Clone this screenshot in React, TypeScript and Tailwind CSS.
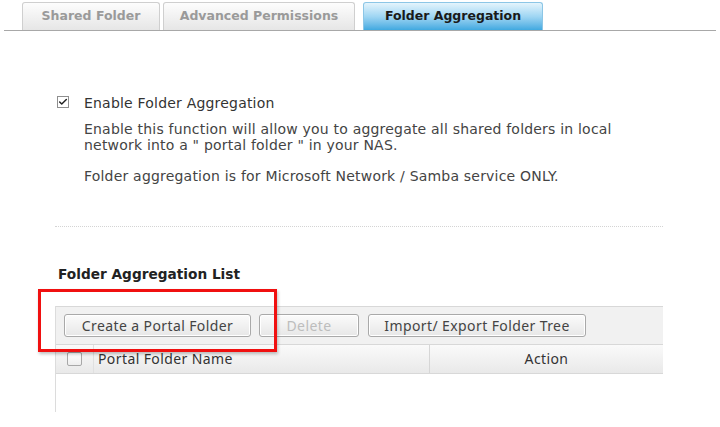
import { Check } from "lucide-react";

const tabs = [
  { label: "Shared Folder", w: "w-[138px]", active: false },
  { label: "Advanced Permissions", w: "w-[192px]", active: false },
  { label: "Folder Aggregation", w: "w-[180px]", active: true },
];

export default function App() {
  return (
    <div className="relative h-[427px] w-[720px] overflow-hidden bg-white font-['DejaVu_Sans',sans-serif] text-[#333]">
      {/* tab strip */}
      <div className="mx-[4px] flex h-[31px] items-end gap-[3px] border-b border-[#a8a8a8] pl-[18px]">
        {tabs.map((t, i) => (
          <div
            key={t.label}
            className={
              "flex h-[28px] items-center justify-center rounded-t-[3px] border border-b-0 text-[12.5px] font-bold " +
              t.w +
              (i === 2 ? " ml-[5px]" : "") +
              (t.active
                ? " border-[#8cc6e6] bg-gradient-to-b from-[#e4f4fc] via-[#9fd6f3] to-[#3fa9e0] text-[#1a1a1a]"
                : " border-[#cfcfcf] bg-gradient-to-b from-[#fdfdfd] to-[#e6e6e6] text-[#9a9a9a]")
            }
          >
            {t.label}
          </div>
        ))}
      </div>

      {/* enable option */}
      <div className="ml-[57px] mt-[64px] flex items-start gap-[15px]">
        <div className="mt-[1px] flex h-[12px] w-[12px] items-center justify-center border border-[#8f8f8f] bg-white">
          <Check size={10} strokeWidth={3.5} className="text-[#222]" />
        </div>
        <div className="text-[14px] leading-[16px] tracking-[0.2px]">
          <div className="text-[#333]">Enable Folder Aggregation</div>
          <div className="mt-[10px] text-[#444]">
            Enable this function will allow you to aggregate all shared folders in local
            <br />
            network into a " portal folder " in your NAS.
          </div>
          <div className="mt-[15px] text-[#444]">
            Folder aggregation is for Microsoft Network / Samba service ONLY.
          </div>
        </div>
      </div>

      <div className="ml-[55px] mt-[42px] w-[608px] border-t border-dotted border-[#d4d4d4]" />

      <div className="ml-[58px] mt-[37px] text-[13.7px] font-bold text-[#222]">
        Folder Aggregation List
      </div>

      {/* list */}
      <div className="ml-[55px] mt-[21px] w-[608px] border-l border-[#dcdcdc]">
        <div className="flex h-[38px] items-center gap-[8px] border-t border-[#d8d8d8] bg-[#f1f1f1] pl-[8px] font-['Noto_Sans',sans-serif] text-[14px] tracking-[0.4px]">
          <Btn className="w-[187px] text-[#444]">Create a Portal Folder</Btn>
          <Btn className="w-[100px] text-[#bdbdbd]">Delete</Btn>
          <Btn className="ml-[1px] w-[218px] text-[#444]">Import/ Export Folder Tree</Btn>
        </div>
        <div className="flex h-[30px] items-stretch border-y border-[#d8d8d8] bg-gradient-to-b from-[#fafafa] to-[#e9e9e9] font-['Noto_Sans',sans-serif] text-[14px] tracking-[0.4px] text-[#333]">
          <div className="flex w-[38px] items-center justify-center border-r border-[#e0e0e0]">
            <div className="h-[14px] w-[15px] rounded-[2px] border border-[#a8a8a8] bg-gradient-to-b from-white to-[#eee]" />
          </div>
          <div className="flex w-[336px] items-center border-r border-[#d6d6d6] pl-[4px]">Portal Folder Name</div>
          <div className="flex flex-1 items-center justify-center">Action</div>
        </div>
        <div className="h-[38px]" />
      </div>

      {/* highlight annotation */}
      <div className="pointer-events-none absolute left-[38px] top-[289px] h-[63px] w-[239px] border-[3px] border-[#f01010] shadow-[1px_2px_3px_rgba(0,0,0,0.25)]" />
    </div>
  );
}

function Btn({ className, children }: { className: string; children: React.ReactNode }) {
  return (
    <div
      className={
        "flex h-[23px] items-center justify-center rounded-[3px] border border-[#a9a9a9] bg-gradient-to-b from-[#fbfbfb] to-[#e7e7e7] shadow-[inset_0_0_0_1px_#fff] " +
        className
      }
    >
      {children}
    </div>
  );
}
